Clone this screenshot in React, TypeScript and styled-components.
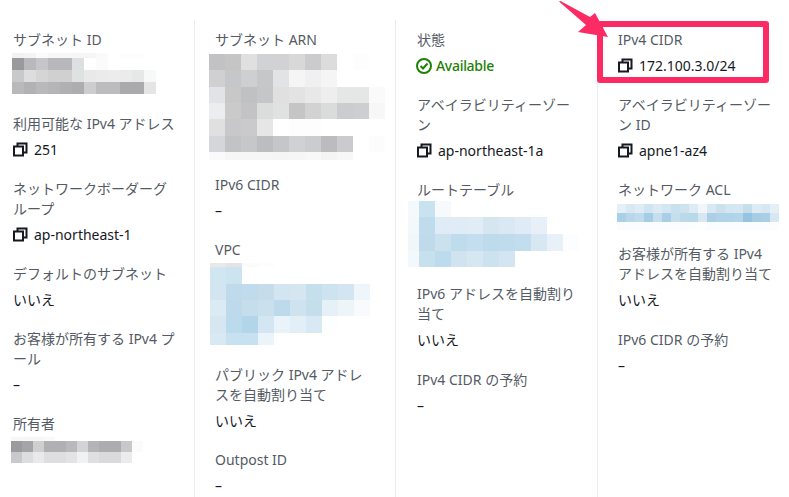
import React from "react"
import styled, { createGlobalStyle } from "styled-components";

const GlobalStyle = createGlobalStyle`
  html, body {
    margin: 0;
    padding: 0;
    background: #fff;
  }
`;

const Page = styled.div`
  position: relative;
  width: 789px;
  height: 497px;
  overflow: hidden;
  display: grid;
  grid-template-columns: 195px 201px 202px 1fr;
  padding-top: 20px;
  box-sizing: border-box;
  font-family: "Noto Sans", "Noto Sans CJK JP", sans-serif;
  font-size: 14px;
  line-height: 20px;
`;

const Column = styled.div<{ $pad: number; $right?: number; $last?: boolean }>`
  padding: 10px ${(p) => p.$right ?? 14}px 0 ${(p) => p.$pad}px;
  border-right: ${(p) => (p.$last ? "none" : "1px solid #eaeded")};
  min-width: 0;
`;

const Field = styled.div<{ $after?: number }>`
  margin-bottom: ${(p) => p.$after ?? 19.5}px;
`;

const Label = styled.div`
  color: #545b64;
`;

const Value = styled.div`
  display: flex;
  align-items: center;
  gap: 6px;
  margin-top: 5.5px;
  color: #16191f;
`;

const Status = styled(Value)`
  gap: 4px;
  margin-left: -1px;
  color: #1d8102;
  font-weight: 500;
  letter-spacing: -0.3px;
`;

const Pixels = styled.svg<{ $shift: number; $top: number }>`
  display: block;
  margin-left: ${(p) => p.$shift}px;
  margin-top: ${(p) => p.$top}px;
`;

const Highlight = styled.div`
  position: absolute;
  left: 597px;
  top: 21px;
  width: 172px;
  height: 62px;
  box-sizing: border-box;
  border: 6px solid #fc2b63;
  border-radius: 3px;
`;

const Arrow = styled.svg`
  position: absolute;
  left: 550px;
  top: 0;
`;

const CopyIcon = () => (
  <svg width="15" height="15" viewBox="0 0 15 15" fill="none" stroke="#16191f" strokeWidth="2">
    <rect x="1" y="4.5" width="9" height="9" />
    <path d="M4.5 4V1.5H13.5V10.5H10.5" />
  </svg>
);

const CheckIcon = () => (
  <svg width="16" height="16" viewBox="0 0 16 16" fill="none" stroke="#1d8102" strokeWidth="2">
    <circle cx="8" cy="8" r="7" />
    <path d="M4.5 8L7 10.5L11.5 5.5" />
  </svg>
);

type MosaicProps = {
  rows: { h: number; colors: string[] }[];
  cell: number;
  shift: number;
  top?: number;
  firstCell?: number;
};

const Mosaic = ({ rows, cell, shift, top = 0, firstCell }: MosaicProps) => {
  const first = firstCell ?? cell;
  const width = first + cell * (Math.max(...rows.map((r) => r.colors.length)) - 1);
  const height = rows.reduce((sum, r) => sum + r.h, 0);
  let y = 0;
  return (
    <Pixels $shift={shift} $top={top} width={width} height={height} shapeRendering="crispEdges">
      {rows.map((row, i) => {
        const rowY = y;
        y += row.h;
        return row.colors.map((c, j) => (
          <rect
            key={`${i}-${j}`}
            x={j === 0 ? 0 : first + (j - 1) * cell}
            y={rowY}
            width={j === 0 ? first : cell}
            height={row.h}
            fill={c}
          />
        ));
      })}
    </Pixels>
  );
};

const subnetRows = [
  { h: 5, colors: ["#f2f2f2", "#f4f4f4", "#fbfbfb", "#f7f7f7", "#f7f7f7", "#f6f6f6", "#f5f5f5", "#fafafa", "#fff", "#fdfdfd", "#fdfdfd"] },
  { h: 12, colors: ["#999a9c", "#b9b9bb", "#c6c6c8", "#b8b8ba", "#b8b8ba", "#dde0e0", "#fff", "#fbfbfb", "#fff", "#fff", "#fff"] },
  { h: 12, colors: ["#c8c9ca", "#dddddd", "#d5d5d6", "#d0d0d1", "#d0d0d1", "#e0e2e2", "#e9e9ea", "#ebebeb", "#ececec", "#ebebeb", "#e6e8e8", "#f7f8f8"] },
  { h: 12, colors: ["#b9b9bb", "#b2b2b4", "#b9b9bb", "#b5b5b7", "#b0b0b2", "#adadaf", "#cdcdcf", "#bcbcbe", "#bcbcbe", "#aaaaac", "#aaaaac", "#e5e5e5"] },
];

const ownerRows = [
  { h: 4, colors: ["#f7f7f7", "#f7f7f7", "#f7f7f7", "#f9f9f9", "#fff"] },
  { h: 11, colors: ["#9b9b9d", "#a5a5a7", "#cfcfd0", "#b0b0b2", "#b0b0b2", "#b9b9bb", "#d2d3d5", "#b4b4b6", "#adadaf", "#adadaf", "#c8c8ca", "#fbfbfb"] },
  { h: 11, colors: ["#c8c9cb", "#dcdde0", "#e9e9ea", "#dedee0", "#dedee0", "#e3e3e5", "#f0f1f1", "#dfdfe2", "#dadadc", "#dadadc", "#ebebec"] },
];

const arnRows = [
  { h: 16, colors: ["#c2c2c4", "#c5c5c6", "#e0e0e0", "#d0d2d5", "#d2d2d4", "#d8d8d9", "#cbcbcd", "#dcdcdc", "#fff", "#fdfdfd"] },
  { h: 17, colors: ["#d0d0d2", "#c5c7c9", "#cdcfd1", "#c5c7c9", "#e2e3e6", "#f5f5f5", "#f0f0f1", "#f5f5f6", "#fff"] },
  { h: 16, colors: ["#e2e3e6", "#c8c8c8", "#c0c1c3", "#c5c6c8", "#e0e0e1", "#e3e3e4", "#e8e8e9", "#eeeeef", "#e5e7e7", "#e5e7e7", "#fafafa"] },
  { h: 16, colors: ["#ecedef", "#cacaca", "#c3c3c5", "#dadddc", "#dfe2e1", "#c5c5c6", "#d2d2d3", "#dadcdb", "#cbccce", "#cdced0", "#f7f7f7"] },
  { h: 17, colors: ["#e0e0e1", "#c8c8ca", "#cacacc", "#e6e6e7", "#fff", "#fdfdfd", "#fdfdfd", "#fff"] },
  { h: 16, colors: ["#d5d6d9", "#c2c3c5", "#c6c7c9", "#bcbdbf", "#c5c6c8", "#d0d1d3", "#cbccce", "#bcbcbe", "#cbcbce", "#fff", "#fcfcfc"] },
  { h: 8, colors: ["#fafafa", "#f6f6f6", "#f6f6f6", "#f6f6f6", "#f5f5f5", "#f6f6f6", "#f8f8f8", "#f4f4f4", "#f7f7f7"] },
];

const vpcRows = [
  { h: 4, colors: ["#e9e9e9", "#e4e4e4", "#fbfbfb", "#fdfdfd"] },
  { h: 17, colors: ["#d0e7f2", "#cce4f0", "#fff"] },
  { h: 16, colors: ["#d2e5f0", "#bfdaea", "#c0dbeb", "#c6dcea", "#d3e5f1", "#d6e6f1", "#c6dfec", "#cde3f0", "#d3e5f0", "#eef5fb"] },
  { h: 16, colors: ["#dbeaf3", "#bcdaeb", "#c6ddec", "#cbe0ed", "#bddaec", "#cfe3ef", "#c5deec", "#e6f1f7", "#eef5f9", "#f8fafd"] },
  { h: 17, colors: ["#d6e7f2", "#bbdaec", "#b2d5ea", "#d4e6f2", "#e9f3f9", "#e3eff7", "#d9e9f3", "#fdfeff"] },
  { h: 12, colors: ["#d8e9f3", "#c8e1f0", "#c8e1f0", "#ebf4fa"] },
];

const routeRows = [
  { h: 16, colors: ["#f4f9fc", "#c9e2ef", "#f6fafd", "#fff"] },
  { h: 17, colors: ["#f2f8fb", "#bfdcec", "#dfecf5", "#dfecf5", "#e0edf5", "#d6e6f1", "#d9e8f2", "#dfecf5", "#e7f0f8"] },
  { h: 17, colors: ["#f0f7fb", "#bfdaea", "#cbe1ee", "#bfdcec", "#c3deee", "#bddbeb", "#bfdcec", "#c2ddee", "#d7e8f3", "#e8f1f8", "#fcfdfe"] },
  { h: 16, colors: ["#f2f8fb", "#c6e0ee", "#bcdbec", "#d0e3f0", "#d7e7f2", "#cde2ef", "#d2e5f1", "#fff"] },
];

const aclRows = [
  { h: 9, colors: ["#e4eff6", "#d9e9f3", "#dfecf5", "#d1e5f0", "#dbeaf4", "#d3e6f1", "#c9e0ee", "#cfe3ef", "#dcebf4", "#f0f6fa", "#d8e9f3", "#cbe1ee", "#d3e6f1", "#d6e7f2", "#c6deec", "#dcebf4", "#d8e8f2", "#e4eff6"] },
  { h: 9, colors: ["#a9d0e6", "#b8d8ea", "#c0dbeb", "#a5cde5", "#c5deed", "#a9cfe6", "#c6dfec", "#bcd9ea", "#b9d8ea", "#d6e7f2", "#abd0e6", "#b1d3e8", "#afd3e8", "#b4d5e9", "#96c4e0", "#a7cde5", "#a9cfe6", "#d8e8f2"] },
  { h: 8, colors: ["#fafcfd", "#fbfcfe", "#fbfcfe", "#fafcfd", "#fafcfd", "#fbfcfe", "#fbfcfe", "#fafcfd", "#fcfdfe", "#fdfefe", "#fafcfd", "#fafcfd", "#fbfcfe", "#fbfcfe", "#fafcfd", "#fbfcfe", "#fbfcfe", "#fcfdfe"] },
];

const Copy = ({ children }: { children: React.ReactNode }) => (
  <Value>
    <CopyIcon />
    {children}
  </Value>
);

const App = () => {
  return (
    <React.Fragment>
      <GlobalStyle />
      <Page>
        <Column $pad={13}>
          <Field $after={20}>
            <Label>サブネット ID</Label>
            <Mosaic rows={subnetRows} cell={12} shift={-1} top={3} />
          </Field>
          <Field>
            <Label>利用可能な IPv4 アドレス</Label>
            <Copy>251</Copy>
          </Field>
          <Field>
            <Label>ネットワークボーダーグループ</Label>
            <Copy>ap-northeast-1</Copy>
          </Field>
          <Field>
            <Label>デフォルトのサブネット</Label>
            <Value>いいえ</Value>
          </Field>
          <Field>
            <Label>お客様が所有する IPv4 プール</Label>
            <Value>–</Value>
          </Field>
          <Field>
            <Label>所有者</Label>
            <Mosaic rows={ownerRows} cell={11} shift={-2} top={3} />
          </Field>
        </Column>

        <Column $pad={20} $right={20}>
          <Field $after={15}>
            <Label>サブネット ARN</Label>
            <Mosaic rows={arnRows} cell={16} shift={-6} top={4} />
          </Field>
          <Field>
            <Label>IPv6 CIDR</Label>
            <Value>–</Value>
          </Field>
          <Field $after={20}>
            <Label>VPC</Label>
            <Mosaic rows={vpcRows} cell={16} shift={-5} top={3} />
          </Field>
          <Field>
            <Label>パブリック IPv4 アドレスを自動割り当て</Label>
            <Value>いいえ</Value>
          </Field>
          <Field>
            <Label>Outpost ID</Label>
            <Value>–</Value>
          </Field>
        </Column>

        <Column $pad={21}>
          <Field>
            <Label>状態</Label>
            <Status>
              <CheckIcon />
              Available
            </Status>
          </Field>
          <Field>
            <Label>アベイラビリティーゾーン</Label>
            <Copy>ap-northeast-1a</Copy>
          </Field>
          <Field $after={17}>
            <Label>ルートテーブル</Label>
            <Mosaic rows={routeRows} cell={16} firstCell={11} shift={-9} top={1} />
          </Field>
          <Field $after={20.5}>
            <Label>IPv6 アドレスを自動割り当て</Label>
            <Value>いいえ</Value>
          </Field>
          <Field>
            <Label>IPv4 CIDR の予約</Label>
            <Value>–</Value>
          </Field>
        </Column>

        <Column $pad={20} $last>
          <Field>
            <Label>IPv4 CIDR</Label>
            <Copy>172.100.3.0/24</Copy>
          </Field>
          <Field>
            <Label>アベイラビリティーゾーン ID</Label>
            <Copy>apne1-az4</Copy>
          </Field>
          <Field $after={14}>
            <Label>ネットワーク ACL</Label>
            <Mosaic rows={aclRows} cell={9} shift={-1} top={4} />
          </Field>
          <Field $after={20.5}>
            <Label>お客様が所有する IPv4 アドレスを自動割り当て</Label>
            <Value>いいえ</Value>
          </Field>
          <Field>
            <Label>IPv6 CIDR の予約</Label>
            <Value>–</Value>
          </Field>
        </Column>

        <Highlight />
        <Arrow width="60" height="42" viewBox="0 0 60 42">
          <path d="M9 1.5L10.5 1L40 17L45 13L58 37L28 32L36 25Z" fill="#fc2b63" />
        </Arrow>
      </Page>
    </React.Fragment>
  )
}

export default App;
